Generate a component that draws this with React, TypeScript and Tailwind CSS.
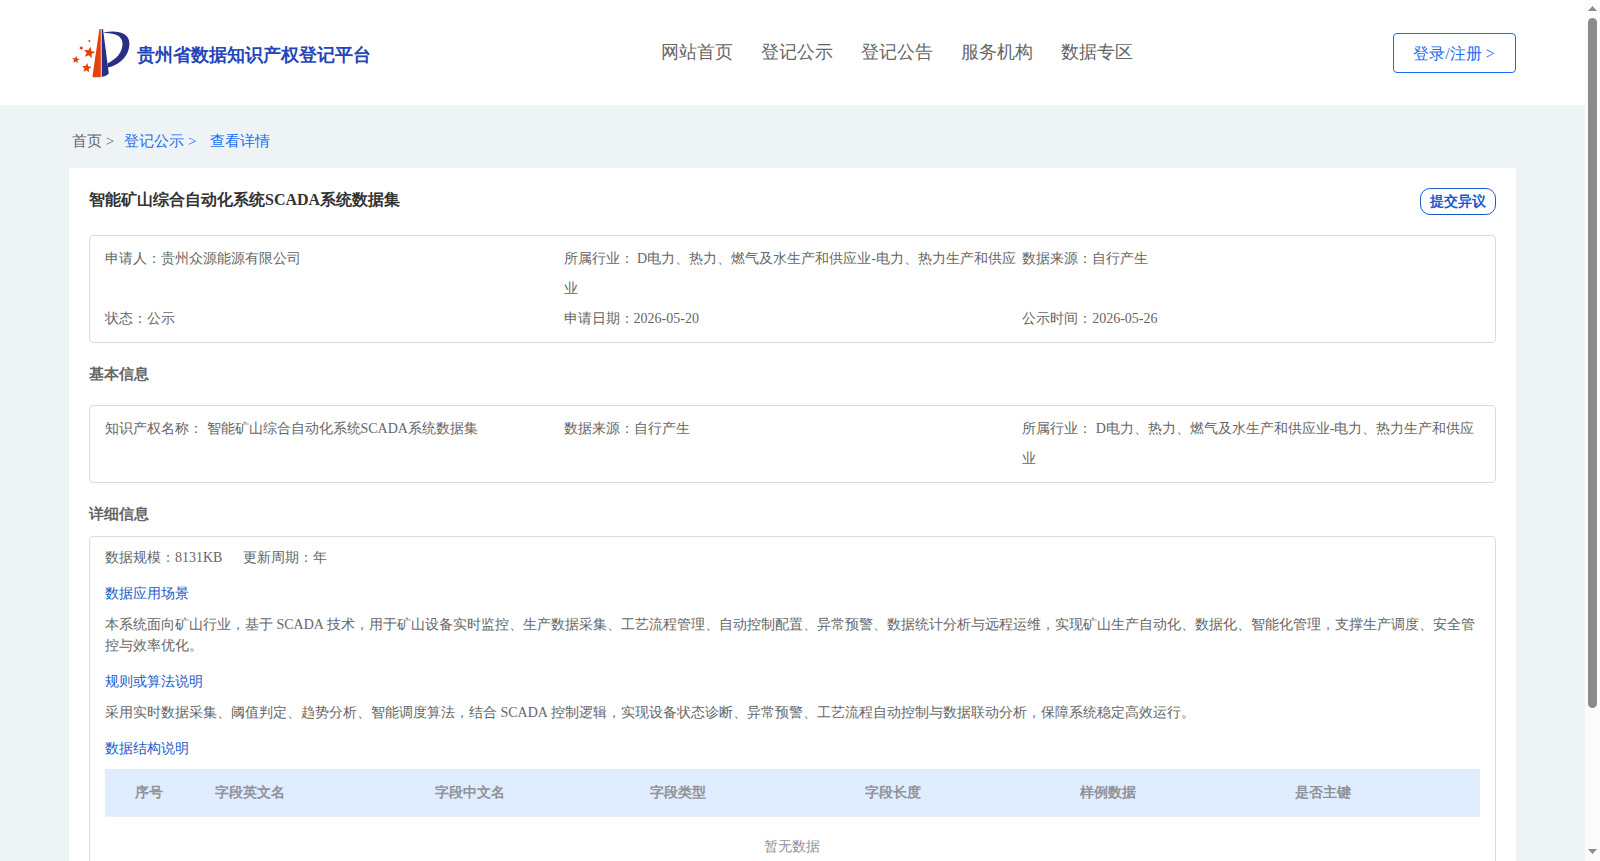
import type { ReactNode } from "react";

const NAV = ["网站首页", "登记公示", "登记公告", "服务机构", "数据专区"];

const SUMMARY = [
  "申请人：贵州众源能源有限公司",
  "所属行业： D电力、热力、燃气及水生产和供应业-电力、热力生产和供应业",
  "数据来源：自行产生",
  "状态：公示",
  "申请日期：2026-05-20",
  "公示时间：2026-05-26",
];

const BASIC = [
  "知识产权名称： 智能矿山综合自动化系统SCADA系统数据集",
  "数据来源：自行产生",
  "所属行业： D电力、热力、燃气及水生产和供应业-电力、热力生产和供应业",
];

const COLUMNS = ["字段英文名", "字段中文名", "字段类型", "字段长度", "样例数据", "是否主键"];

function Star({ x, y, r, turn }: { x: number; y: number; r: number; turn: number }) {
  return (
    <path
      transform={`translate(${x} ${y}) rotate(${turn}) scale(${r})`}
      d="M0 -1 L0.26 -0.36 L0.95 -0.31 L0.42 0.14 L0.59 0.81 L0 0.44 L-0.59 0.81 L-0.42 0.14 L-0.95 -0.31 L-0.26 -0.36 Z"
    />
  );
}

function Logo() {
  return (
    <svg width="58" height="50" viewBox="0 0 58 50" className="mt-px shrink-0">
      <path d="M27.4 1 H28.8 V49 Q24.5 49.6 20.4 49 Z" fill="#e5400f" />
      <path d="M29.7 1 H31 L36.8 45.7 Q33.6 48.4 29.7 49 Z" fill="#2a2f86" />
      <path
        d="M32 4.4 C45 2 57.4 4.5 57.4 15.5 C57.4 29 46 37.5 36 39.4 L35.5 35.6 C44 31 50.5 25 50.5 15.5 C50.5 8 43 4.6 32 4.9 Z"
        fill="#2a2f86"
      />
      <g fill="#e5400f">
        <Star x={17.3} y={24.7} r={6} turn={12} />
        <Star x={3.8} y={31.8} r={4} turn={8} />
        <Star x={14.7} y={40} r={5} turn={6} />
        <Star x={9.3} y={20} r={2.4} turn={20} />
        <Star x={17.4} y={13} r={1.6} turn={0} />
      </g>
    </svg>
  );
}

function InfoBox({ items, className }: { items: string[]; className: string }) {
  return (
    <div
      className={`grid grid-cols-[458.6px_458.6px_1fr] rounded-[4px] border border-[#dcdcdc] px-[15px] py-2 leading-[30px] ${className}`}
    >
      {items.map((item) => (
        <div key={item}>{item}</div>
      ))}
    </div>
  );
}

function Section({ title, children }: { title: string; children: ReactNode }) {
  return (
    <section>
      <h4 className="mt-[15px] text-[#1a5bcb]">{title}</h4>
      <div className="mt-[10px]">{children}</div>
    </section>
  );
}

function Scrollbar() {
  return (
    <div className="flex w-[15px] shrink-0 flex-col items-center bg-[#fcfcfc]">
      <svg width="15" height="17" viewBox="0 0 15 17">
        <path d="M3 11 L7.5 6 L12 11 Z" fill="#8b8b8b" />
      </svg>
      <div className="mt-px h-[690px] w-[9px] rounded-full bg-[#8b8b8b]" />
      <svg width="15" height="17" viewBox="0 0 15 17" className="mt-auto">
        <path d="M3 5 L7.5 10 L12 5 Z" fill="#8b8b8b" />
      </svg>
    </div>
  );
}

export default function App() {
  return (
    <div className="flex h-[861px] overflow-hidden bg-[#eef3f6] font-['Liberation_Serif',serif] text-sm leading-[21px] text-[#666]">
      <div className="flex min-w-0 flex-1 flex-col">
        <header className="flex h-[105px] shrink-0 bg-white pr-[69px] pl-[72px]">
          <div className="flex w-[588.5px] items-center">
            <Logo />
            <span className="mt-[6px] ml-[7px] text-[18px] font-bold text-[#2346b8]">贵州省数据知识产权登记平台</span>
          </div>
          <nav className="flex flex-1 gap-7 pt-[39px] text-[18px] leading-[27px]">
            {NAV.map((label) => (
              <a key={label}>{label}</a>
            ))}
          </nav>
          <button className="mt-[33px] h-10 w-[123px] rounded border border-[#1a6df0] pt-px pr-px text-base text-[#1a6df0]">
            登录/注册 &gt;
          </button>
        </header>

        <div className="flex h-[63px] shrink-0 items-center pt-[9px] pl-[72px] text-[15px]">
          <span>首页 &gt;</span>
          <span className="ml-[10px] text-[#1a6df0]">登记公示 &gt;</span>
          <span className="ml-[14px] text-[#1a6df0]">查看详情</span>
        </div>

        <main className="mr-[69px] ml-[69px] flex-1 bg-white px-5 pt-5">
          <div className="flex items-start justify-between">
            <h1 className="pt-px text-base leading-[22px] font-bold text-[#333]">智能矿山综合自动化系统SCADA系统数据集</h1>
            <button className="h-[27px] w-[76px] rounded-[10px] border border-[#1a5bcb] font-bold text-[#1a5bcb]">
              提交异议
            </button>
          </div>

          <InfoBox items={SUMMARY} className="mt-5" />

          <h2 className="mt-[21px] text-[15px] font-bold">基本信息</h2>
          <InfoBox items={BASIC} className="mt-5" />

          <h2 className="mt-[21px] text-[15px] font-bold">详细信息</h2>
          <div className="mt-[11px] h-[500px] rounded-[4px] border border-[#dcdcdc] px-[15px] pt-[10px]">
            <div className="flex gap-[21px]">
              <span>数据规模：8131KB</span>
              <span>更新周期：年</span>
            </div>
            <Section title="数据应用场景">
              本系统面向矿山行业，基于 SCADA 技术，用于矿山设备实时监控、生产数据采集、工艺流程管理、自动控制配置、异常预警、数据统计分析与远程运维，实现矿山生产自动化、数据化、智能化管理，支撑生产调度、安全管控与效率优化。
            </Section>
            <Section title="规则或算法说明">
              采用实时数据采集、阈值判定、趋势分析、智能调度算法，结合 SCADA 控制逻辑，实现设备状态诊断、异常预警、工艺流程自动控制与数据联动分析，保障系统稳定高效运行。
            </Section>
            <Section title="数据结构说明">
              <div className="grid h-12 grid-cols-[100px_220px_repeat(4,215px)_1fr] items-center border-b border-[#ebeef5] bg-[#e0ecff] font-bold text-[#909399]">
                <div className="pl-[30px]">序号</div>
                {COLUMNS.map((col) => (
                  <div key={col} className="pl-[10px]">
                    {col}
                  </div>
                ))}
              </div>
              <div className="flex h-[58px] items-center justify-center pr-px text-[#909399]">暂无数据</div>
            </Section>
          </div>
        </main>
      </div>
      <Scrollbar />
    </div>
  );
}
